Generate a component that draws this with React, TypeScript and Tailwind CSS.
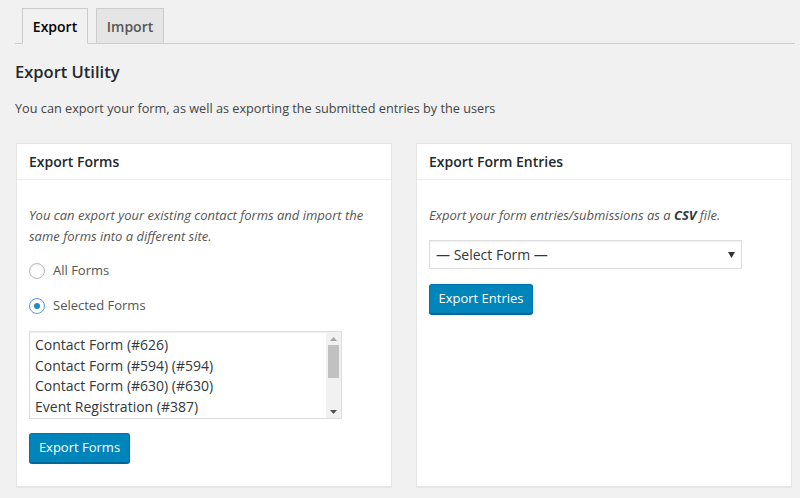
import React from "react";

const forms = [
  "Contact Form (#626)",
  "Contact Form (#594) (#594)",
  "Contact Form (#630) (#630)",
  "Event Registration (#387)",
];

function Radio({ checked, label }: { checked?: boolean; label: string }) {
  return (
    <label className="flex items-center h-[20px] gap-[8px] text-[13px] text-[#555]">
      <span
        className={
          "w-[16px] h-[16px] rounded-full border bg-white flex items-center justify-center shadow-[inset_0_1px_2px_rgba(0,0,0,0.07)] " +
          (checked ? "border-[#5b9dd9]" : "border-[#b4b9be]")
        }
      >
        {checked && <span className="w-[6px] h-[6px] rounded-full bg-[#1e8cbe]" />}
      </span>
      {label}
    </label>
  );
}

function Card({ title, children }: { title: string; children: React.ReactNode }) {
  return (
    <div className="w-[376px] h-[344px] bg-white border border-[#e5e5e5] shadow-[0_1px_1px_rgba(0,0,0,0.04)]">
      <div className="h-[36px] border-b border-[#eee] px-[12px] flex items-center text-[14px] font-semibold text-[#23282d]">
        {title}
      </div>
      <div className="px-[12px] pt-[25px]">{children}</div>
    </div>
  );
}

function BlueButton({ label, width }: { label: string; width: string }) {
  return (
    <button
      className={
        "h-[30px] rounded-[3px] bg-[#0085ba] border border-[#0073aa] border-b-[#006799] text-white text-[13px] shadow-[0_1px_0_#006799] " +
        width
      }
    >
      {label}
    </button>
  );
}

export default function App() {
  return (
    <div
      className="w-[800px] h-[498px] bg-[#f1f1f1] overflow-hidden text-[#23282d]"
      style={{ fontFamily: '"Open Sans", "Noto Sans", sans-serif' }}
    >
      {/* Tabs */}
      <div className="pt-[8px] pl-[15px] pr-[5px]">
        <div className="flex items-end gap-[8px] pl-[7px] border-b border-[#ccc] h-[36px]">
          <div className="h-[36px] w-[66px] -mb-px border border-[#ccc] border-b-[#f1f1f1] bg-[#f1f1f1] flex items-center justify-center text-[14px] font-semibold text-black">
            Export
          </div>
          <div className="h-[35px] w-[68px] border border-[#ccc] border-b-0 bg-[#e5e5e5] flex items-center justify-center text-[14px] font-semibold text-[#555]">
            Import
          </div>
        </div>
      </div>

      <h2 className="pl-[15px] mt-[17px] text-[16.5px] leading-[22px] font-semibold text-[#23282d]">Export Utility</h2>
      <p className="pl-[15px] mt-[17px] text-[12.7px] leading-[16px] text-[#444]">
        You can export your form, as well as exporting the submitted entries by the users
      </p>

      <div className="flex gap-[24px] pl-[16px] mt-[27px]">
        <Card title="Export Forms">
          <p className="italic text-[13px] leading-[21px] text-[#555] pr-[4px]">
            You can export your existing contact forms and import the same forms into a different site.
          </p>
          <div className="mt-[14px] flex flex-col gap-[15px]">
            <Radio label="All Forms" />
            <Radio checked label="Selected Forms" />
          </div>
          <div className="mt-[15px] w-[313px] h-[88px] border border-[#ddd] bg-white flex shadow-[inset_0_1px_2px_rgba(0,0,0,0.07)]">
            <div className="flex-1 pl-[5px] pt-[3px] text-[14px] leading-[20.5px] text-[#32373c] overflow-hidden">
              {forms.map((f) => (
                <div key={f} className="whitespace-nowrap">
                  {f}
                </div>
              ))}
            </div>
            <div className="w-[15px] bg-[#f1f1f1] flex flex-col items-center">
              <div className="h-[13px] flex items-center justify-center">
                <svg width="7" height="4" viewBox="0 0 7 4">
                  <path d="M0 4 L3.5 0 L7 4 Z" fill="#a3a3a3" />
                </svg>
              </div>
              <div className="w-[11px] h-[33px] bg-[#c1c1c1]" />
              <div className="flex-1" />
              <div className="h-[13px] flex items-center justify-center">
                <svg width="7" height="4" viewBox="0 0 7 4">
                  <path d="M0 0 L7 0 L3.5 4 Z" fill="#505050" />
                </svg>
              </div>
            </div>
          </div>
          <div className="mt-[14px]">
            <BlueButton label="Export Forms" width="w-[101px]" />
          </div>
        </Card>

        <Card title="Export Form Entries">
          <p className="italic text-[13px] leading-[21px] text-[#555]">
            Export your form entries/submissions as a <b className="font-bold text-[#32373c]">CSV</b> file.
          </p>
          <div className="mt-[14px] w-[313px] h-[29px] border border-[#ddd] bg-white flex items-center justify-between pl-[6px] pr-[6px] shadow-[inset_0_1px_2px_rgba(0,0,0,0.07)] text-[14px] text-[#32373c]">
            <span>— Select Form —</span>
            <svg width="7" height="6" viewBox="0 0 7 6">
              <path d="M0 0 L7 0 L3.5 6 Z" fill="#333" />
            </svg>
          </div>
          <div className="mt-[15px]">
            <BlueButton label="Export Entries" width="w-[104px]" />
          </div>
        </Card>
      </div>
    </div>
  );
}
